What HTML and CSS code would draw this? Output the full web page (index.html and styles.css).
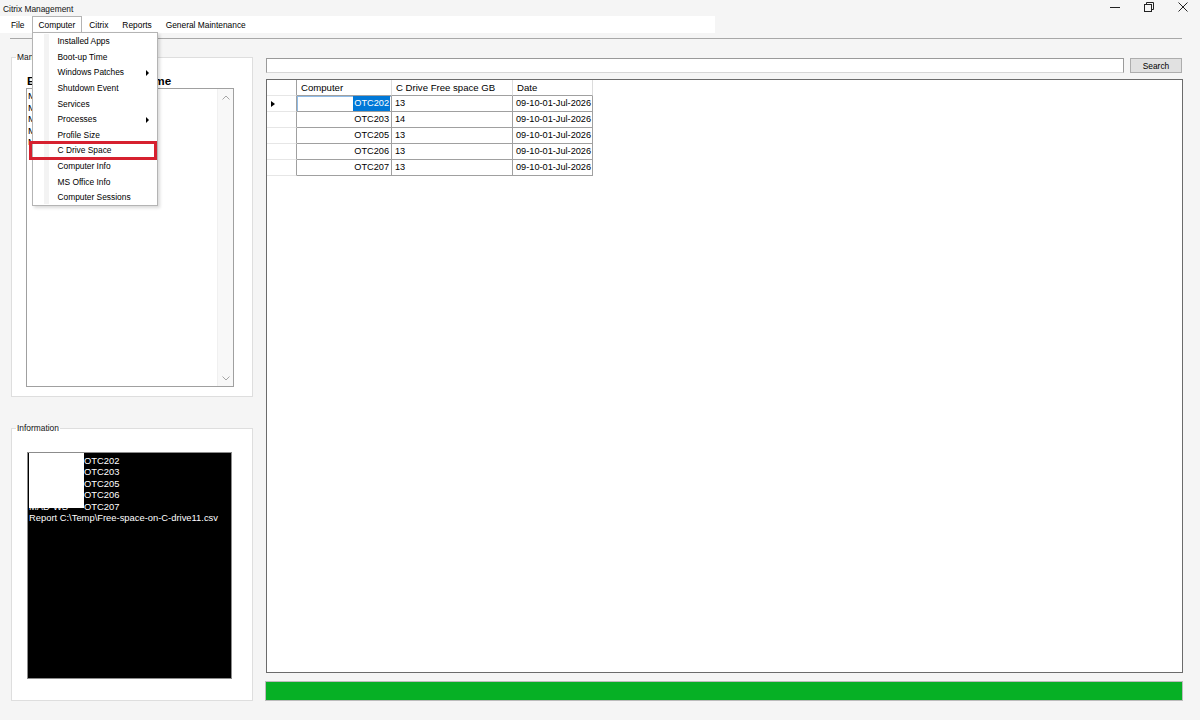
FILE: index.html
```html
<!DOCTYPE html>
<html lang="en">
<head>
    <meta charset="UTF-8">
    <meta name="viewport" content="width=device-width, initial-scale=1.0">
    <title>Citrix Management</title>
    <link rel="stylesheet" href="styles.css">
</head>
<body>
    <div class="titlebar">
        <span class="title">Citrix Management</span>
        <div class="controls">
            <span class="ctl">
                <svg width="10" height="10" viewBox="0 0 10 10"><path d="M0 5.5H10" stroke="#222" stroke-width="1"/></svg>
            </span>
            <span class="ctl">
                <svg width="10" height="10" viewBox="0 0 10 10"><rect x="0.5" y="2.5" width="7" height="7" fill="none" stroke="#222"/><path d="M2.5 2.5V0.5H9.5V7.5H7.5" fill="none" stroke="#222"/></svg>
            </span>
            <span class="ctl">
                <svg width="10" height="10" viewBox="0 0 10 10"><path d="M0.5 0.5L9.5 9.5M9.5 0.5L0.5 9.5" stroke="#222" stroke-width="1"/></svg>
            </span>
        </div>
    </div>

    <nav class="menubar">
        <div class="menu-item">File</div>
        <div class="menu-item open">Computer
            <div class="dropdown">
                <div class="drop-item">Installed Apps</div>
                <div class="drop-item">Boot-up Time</div>
                <div class="drop-item">Windows Patches <span class="sub-arrow"></span></div>
                <div class="drop-item">Shutdown Event</div>
                <div class="drop-item">Services</div>
                <div class="drop-item">Processes <span class="sub-arrow"></span></div>
                <div class="drop-item">Profile Size</div>
                <div class="drop-item">C Drive Space</div>
                <div class="drop-item">Computer Info</div>
                <div class="drop-item">MS Office Info</div>
                <div class="drop-item">Computer Sessions</div>
                <div class="highlight-box"></div>
            </div>
        </div>
        <div class="menu-item">Citrix</div>
        <div class="menu-item">Reports</div>
        <div class="menu-item">General Maintenance</div>
    </nav>
    <div class="separator"></div>

    <div class="main">
        <div class="left">
            <fieldset class="group manage">
                <legend>Manage Computers</legend>
                <div class="list-label">Enter the Computer Name</div>
                <div class="listbox">
                    <div class="list-items">
                        <div>MAD-WSOTC202</div>
                        <div>MAD-WSOTC203</div>
                        <div>MAD-WSOTC205</div>
                        <div>MAD-WSOTC206</div>
                        <div>MAD-WSOTC207</div>
                    </div>
                    <div class="scrollbar">
                        <svg width="8" height="5" viewBox="0 0 8 5"><path d="M0.5 4.5L4 1L7.5 4.5" fill="none" stroke="#a6a6a6"/></svg>
                        <svg width="8" height="5" viewBox="0 0 8 5"><path d="M0.5 0.5L4 4L7.5 0.5" fill="none" stroke="#a6a6a6"/></svg>
                    </div>
                </div>
            </fieldset>

            <fieldset class="group info">
                <legend>Information</legend>
                <div class="console">
                    <div><span class="prefix">MAD-WS</span>OTC202</div>
                    <div><span class="prefix">MAD-WS</span>OTC203</div>
                    <div><span class="prefix">MAD-WS</span>OTC205</div>
                    <div><span class="prefix">MAD-WS</span>OTC206</div>
                    <div><span class="prefix">MAD-WS</span>OTC207</div>
                    <div>Report C:\Temp\Free-space-on-C-drive11.csv</div>
                    <div class="mask"></div>
                </div>
            </fieldset>
        </div>

        <div class="right">
            <div class="search-row">
                <input class="search-input" type="text">
                <button class="search-button">Search</button>
            </div>

            <div class="grid">
                <table>
                    <colgroup>
                        <col class="col-head">
                        <col class="col-computer">
                        <col class="col-space">
                        <col class="col-date">
                    </colgroup>
                    <thead>
                        <tr>
                            <th class="corner"></th>
                            <th>Computer</th>
                            <th>C Drive Free space GB</th>
                            <th>Date</th>
                        </tr>
                    </thead>
                    <tbody id="grid-rows"></tbody>
                </table>
            </div>

            <div class="progress"><div class="progress-fill"></div></div>
        </div>
    </div>

    <script>
        const rows = [
            { computer: 'OTC202', space: 13, date: '09-10-01-Jul-2026' },
            { computer: 'OTC203', space: 14, date: '09-10-01-Jul-2026' },
            { computer: 'OTC205', space: 13, date: '09-10-01-Jul-2026' },
            { computer: 'OTC206', space: 13, date: '09-10-01-Jul-2026' },
            { computer: 'OTC207', space: 13, date: '09-10-01-Jul-2026' }
        ];

        const gridRows = document.getElementById('grid-rows');

        rows.forEach((row, i) => {
            const tr = document.createElement('tr');
            const current = i === 0;
            tr.innerHTML = `
                <td class="row-head">${current ? '<span class="row-arrow"></span>' : ''}</td>
                <td class="cell-computer${current ? ' selected' : ''}"><span>${row.computer}</span></td>
                <td>${row.space}</td>
                <td>${row.date}</td>
            `;
            gridRows.appendChild(tr);
        });
    </script>
</body>
</html>
```

FILE: styles.css
```css
body {
    margin: 0;
    padding: 0;
    background-color: #f5f5f5;
    color: #000;
    font-family: 'Liberation Sans', Arial, sans-serif;
    font-size: 8.4px;
    width: 1200px;
    height: 720px;
    overflow: hidden;
}

/* window title */

.titlebar {
    display: flex;
    justify-content: space-between;
    height: 16px;
    line-height: 16px;
}

.title {
    padding: 1px 0 0 3px;
    color: #111;
}

.controls {
    display: flex;
}

.ctl {
    width: 34px;
    display: flex;
    align-items: center;
    justify-content: center;
    padding-bottom: 3px;
    box-sizing: border-box;
}

/* menu strip */

.menubar {
    display: flex;
    width: 715px;
    height: 17px;
    padding-left: 4px;
    box-sizing: border-box;
    background-color: #fff;
}

.menu-item {
    position: relative;
    height: 14px;
    padding: 1px 6px 0;
    line-height: 15px;
    border: 1px solid transparent;
    color: #000;
}

.menu-item.open {
    border-color: #b4b4b4;
    border-bottom-color: transparent;
    background-color: #fff;
    z-index: 2;
}

.dropdown {
    position: absolute;
    left: -1px;
    top: 15px;
    width: 126px;
    box-sizing: border-box;
    background-color: #fff;
    border: 1px solid #b4b4b4;
    box-shadow: 2px 2px 3px rgba(0, 0, 0, 0.15);
}

.dropdown::before {
    content: '';
    position: absolute;
    left: 11px;
    top: 1px;
    bottom: 1px;
    width: 5px;
    background-color: #f3f3f3;
}

.drop-item {
    position: relative;
    display: flex;
    justify-content: space-between;
    align-items: center;
    height: 15.6px;
    box-sizing: border-box;
    padding: 2px 8px 0 25px;
    white-space: nowrap;
}

.sub-arrow {
    width: 0;
    height: 0;
    border-top: 3px solid transparent;
    border-bottom: 3px solid transparent;
    border-left: 3px solid #000;
}

.highlight-box {
    position: absolute;
    left: -4px;
    top: 108px;
    width: 128px;
    height: 19px;
    box-sizing: border-box;
    border: 3px solid #d6202f;
}

.separator {
    margin: 5px 18px 0 10px;
    border-top: 1px solid #a8a8a8;
}

/* main layout */

.main {
    display: flex;
    gap: 12px;
    padding-left: 11px;
    margin-top: 13px;
}

.left {
    width: 242px;
    display: flex;
    flex-direction: column;
    gap: 26px;
}

.group {
    margin: 0;
    padding: 0;
    min-width: 0;
    width: 242px;
    box-sizing: border-box;
    background-color: #fff;
    border: 1px solid #dedede;
}

.group legend {
    margin-left: 4px;
    padding: 0 1px;
    line-height: 10px;
    font-size: 8.4px;
    color: #111;
}

.manage {
    height: 345px;
}

.list-label {
    margin: 12px 0 0 15px;
    line-height: 14px;
    font-size: 11.7px;
    font-weight: bold;
    white-space: nowrap;
}

.listbox {
    display: flex;
    margin-left: 14px;
    width: 208px;
    height: 299px;
    box-sizing: border-box;
    border: 1px solid #a0a0a0;
}

.list-items {
    flex: 1;
    padding: 1px 0 0 1px;
    font-size: 9.6px;
    line-height: 11.5px;
}

.scrollbar {
    width: 16px;
    display: flex;
    flex-direction: column;
    justify-content: space-between;
    align-items: center;
    padding: 6px 0 5px;
    box-sizing: border-box;
    background-color: #f8f8f8;
    border-left: 1px solid #f0f0f0;
}

.info {
    height: 278px;
}

.console {
    position: relative;
    margin: 19px 0 0 15px;
    width: 205px;
    height: 227px;
    box-sizing: border-box;
    padding: 2px 0 0 1px;
    background-color: #000;
    border: 1px solid #8c8c8c;
    color: #fff;
    font-size: 9.4px;
    line-height: 11.4px;
    white-space: nowrap;
}

.prefix {
    display: inline-block;
    width: 55px;
    overflow: hidden;
    vertical-align: top;
}

.mask {
    position: absolute;
    left: 1px;
    top: 0;
    width: 55px;
    height: 55px;
    background-color: #fff;
}

/* right side */

.right {
    width: 918px;
    padding-top: 6px;
}

.search-row {
    display: flex;
    justify-content: space-between;
    padding-left: 1px;
    padding-right: 1px;
}

.search-input {
    width: 858px;
    height: 15px;
    margin: 0;
    padding: 0;
    box-sizing: border-box;
    background-color: #fff;
    border: 1px solid #9a9a9a;
    border-bottom-color: #d6d6d6;
}

.search-button {
    width: 52px;
    height: 15px;
    margin: 0;
    padding: 0;
    box-sizing: border-box;
    background-color: #e1e1e1;
    border: 1px solid #adadad;
    font-family: 'Liberation Sans', Arial, sans-serif;
    font-size: 8.4px;
    color: #000;
}

.grid {
    margin: 6px 0 0 1px;
    height: 594px;
    box-sizing: border-box;
    background-color: #fff;
    border: 1px solid #6b6b6b;
}

.grid table {
    table-layout: fixed;
    width: 326px;
    border-collapse: separate;
    border-spacing: 0;
    font-size: 9.2px;
}

.col-head { width: 30px; }
.col-computer { width: 95px; }
.col-space { width: 121px; }
.col-date { width: 80px; }

.grid th {
    text-align: left;
    font-weight: normal;
    font-size: 9.6px;
    line-height: 15px;
    padding: 0 0 0 4px;
    border-right: 1px solid #dcdcdc;
    border-bottom: 1px solid #a0a0a0;
    white-space: nowrap;
}

.grid th.corner {
    border-bottom-color: #e6e6e6;
    border-right-color: #a0a0a0;
}

.grid td {
    line-height: 15px;
    padding: 0 0 0 3px;
    border-right: 1px solid #a0a0a0;
    border-bottom: 1px solid #a0a0a0;
    white-space: nowrap;
    overflow: hidden;
}

.grid td.row-head {
    position: relative;
    border-bottom-color: #e6e6e6;
}

.row-arrow {
    position: absolute;
    left: 4px;
    top: 5px;
    width: 0;
    height: 0;
    border-top: 3px solid transparent;
    border-bottom: 3px solid transparent;
    border-left: 4px solid #000;
}

.grid td.cell-computer {
    text-align: right;
    padding: 0 1px 0 0;
}

.cell-computer span {
    padding-right: 1px;
}

.cell-computer.selected {
    box-shadow: inset 1px 1px 0 #8fbbe6;
}

.cell-computer.selected span {
    display: inline-block;
    padding-left: 1px;
    background-color: #0078d7;
    color: #fff;
}

.progress {
    margin-top: 8px;
    height: 20px;
    box-sizing: border-box;
    border: 1px solid #bcbcbc;
    background-color: #e6e6e6;
}

.progress-fill {
    height: 100%;
    background-color: #06b025;
}
```
